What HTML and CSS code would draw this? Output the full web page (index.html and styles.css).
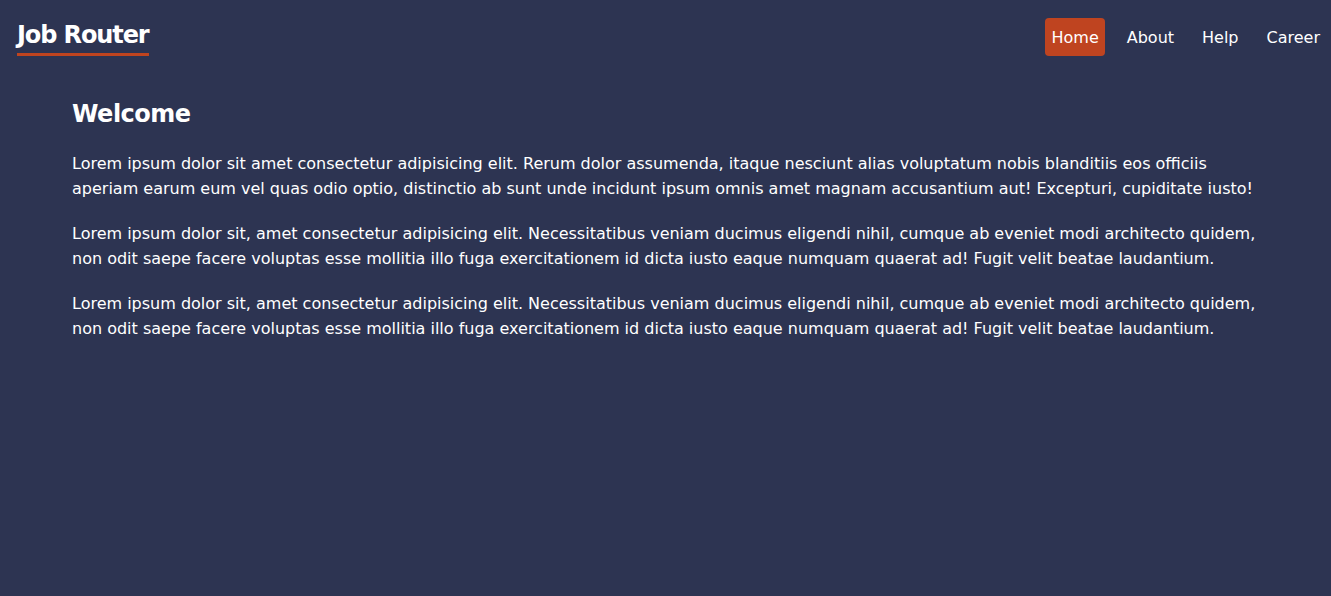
FILE: index.html
```html
<!DOCTYPE html>
<html lang="en">
<head>
<meta charset="utf-8">
<title>Job Router</title>
<link rel="stylesheet" href="styles.css">
</head>
<body>
<header class="header">
  <a class="logo" href="#">Job Router</a>
  <nav class="nav">
    <a class="nav-link active" href="#">Home</a>
    <a class="nav-link" href="#">About</a>
    <a class="nav-link" href="#">Help</a>
    <a class="nav-link" href="#">Career</a>
  </nav>
</header>
<main class="main">
  <h1 class="title">Welcome</h1>
  <p class="text">Lorem ipsum dolor sit amet consectetur adipisicing elit. Rerum dolor assumenda, itaque nesciunt alias voluptatum nobis blanditiis eos officiis aperiam earum eum vel quas odio optio, distinctio ab sunt unde incidunt ipsum omnis amet magnam accusantium aut! Excepturi, cupiditate iusto!</p>
  <p class="text">Lorem ipsum dolor sit, amet consectetur adipisicing elit. Necessitatibus veniam ducimus eligendi nihil, cumque ab eveniet modi architecto quidem, non odit saepe facere voluptas esse mollitia illo fuga exercitationem id dicta iusto eaque numquam quaerat ad! Fugit velit beatae laudantium.</p>
  <p class="text">Lorem ipsum dolor sit, amet consectetur adipisicing elit. Necessitatibus veniam ducimus eligendi nihil, cumque ab eveniet modi architecto quidem, non odit saepe facere voluptas esse mollitia illo fuga exercitationem id dicta iusto eaque numquam quaerat ad! Fugit velit beatae laudantium.</p>
</main>
</body>
</html>
```
FILE: styles.css
```css
* { box-sizing: border-box; }
html, body { margin: 0; padding: 0; }
body {
  background: #2d3452;
  color: #ffffff;
  font-family: "DejaVu Sans", "Noto Sans", sans-serif;
  min-height: 596px;
}
.header {
  display: flex;
  justify-content: space-between;
  align-items: flex-start;
  padding: 18px 5px 0 17px;
}
.logo {
  color: #ffffff;
  text-decoration: none;
  font-size: 24px;
  font-weight: 700;
  line-height: 32px;
  padding-top: 1px;
  padding-bottom: 2px;
  border-bottom: 3px solid #c0441f;
  letter-spacing: -1.1px;
}
.nav {
  display: flex;
  gap: 16px;
}
.nav-link {
  color: #ffffff;
  text-decoration: none;
  font-size: 16px;
  line-height: 24px;
  padding: 8px 6px 6px;
  border-radius: 4px;
}
.nav-link.active {
  background: #bf4420;
}
.main {
  padding: 0 72px;
}
.title {
  margin: 42px 0 21px;
  font-size: 24px;
  font-weight: 700;
  line-height: 32px;
  letter-spacing: -0.5px;
}
.text {
  margin: 0 0 20px;
  font-size: 16px;
  line-height: 25px;
}
```
